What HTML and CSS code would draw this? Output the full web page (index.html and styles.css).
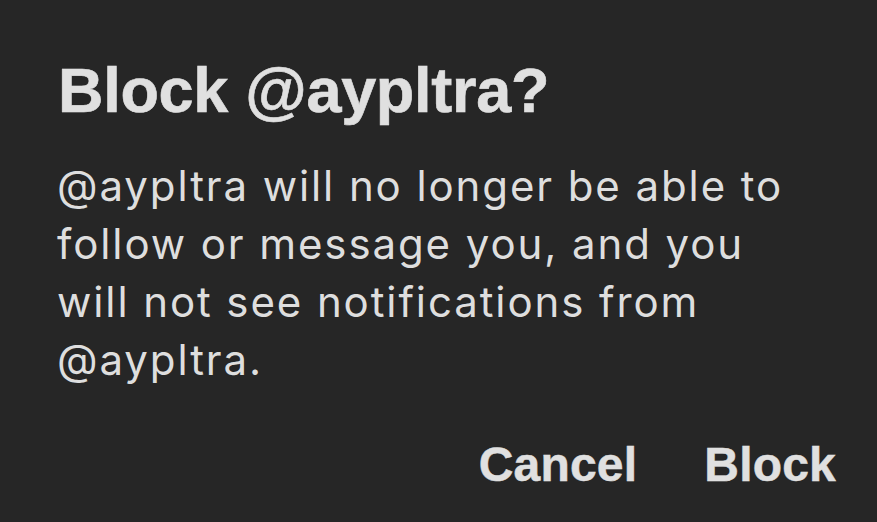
FILE: index.html
```html
<!DOCTYPE html>
<html lang="en">
<head>
<meta charset="utf-8">
<title>Block @aypltra?</title>
<link rel="stylesheet" href="styles.css">
</head>
<body>
<div class="dialog">
  <h1 class="title">Block @aypltra?</h1>
  <p class="message">@aypltra will no longer be able to follow or message you, and you will not see notifications from @aypltra.</p>
  <div class="actions">
    <button class="btn">Cancel</button>
    <button class="btn">Block</button>
  </div>
</div>
</body>
</html>
```
FILE: styles.css
```css
html, body {
  margin: 0;
  padding: 0;
  background: #262626;
  height: 100%;
}
.dialog {
  display: flex;
  flex-direction: column;
  padding: 52px 41px 0 58px;
  color: #e0e0e0;
}
.title {
  margin: 0;
  font-family: "Liberation Sans", Arial, sans-serif;
  font-weight: 700;
  font-size: 63px;
  line-height: 76px;
  letter-spacing: -0.3px;
  -webkit-text-stroke: 0.6px #e0e0e0;
}
.message {
  margin: 29px 0 0 -1px;
  font-family: Inter, "Liberation Sans", sans-serif;
  font-weight: 400;
  font-size: 42px;
  line-height: 58px;
  letter-spacing: 1.9px;
  max-width: 750px;
  color: #dedede;
}
.actions {
  margin-top: 47px;
  display: flex;
  justify-content: flex-end;
  gap: 67px;
}
.btn {
  background: none;
  border: 0;
  padding: 0;
  color: #e0e0e0;
  font-family: "Liberation Sans", Arial, sans-serif;
  font-weight: 700;
  font-size: 48px;
  line-height: 58px;
  letter-spacing: 0.2px;
  -webkit-text-stroke: 0.5px #e0e0e0;
}
```
